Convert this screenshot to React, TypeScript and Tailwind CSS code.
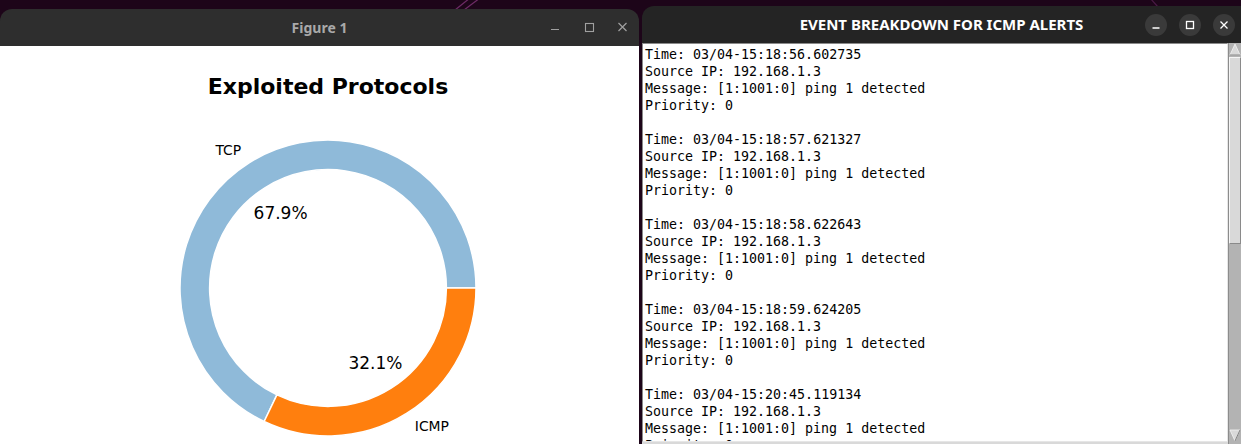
import React from 'react';

const events = [
  '03/04-15:18:56.602735',
  '03/04-15:18:57.621327',
  '03/04-15:18:58.622643',
  '03/04-15:18:59.624205',
  '03/04-15:20:45.119134',
];

function DonutChart() {
  return (
    <svg width="340" height="344" viewBox="0 0 340 344" className="block">
      <path
        d="M 318 188 A 148 148 0 1 0 106.15 321.53 L 118.92 294.82 A 118.4 118.4 0 1 1 288.4 188 Z"
        fill="#8fbad9"
        stroke="#ffffff"
        strokeWidth="1.5"
      />
      <path
        d="M 106.15 321.53 A 148 148 0 0 0 318 188 L 288.4 188 A 118.4 118.4 0 0 1 118.92 294.82 Z"
        fill="#ff7f0e"
        stroke="#ffffff"
        strokeWidth="1.5"
      />
      <g style={{ fontFamily: '"DejaVu Sans", sans-serif' }} fill="#000000">
        <text x="83.2" y="50.3" fontSize="13.9" textAnchor="end" dominantBaseline="central">TCP</text>
        <text x="122.6" y="112.9" fontSize="17" textAnchor="middle" dominantBaseline="central">67.9%</text>
        <text x="256.8" y="325.7" fontSize="13.9" textAnchor="start" dominantBaseline="central">ICMP</text>
        <text x="217.4" y="263.1" fontSize="17" textAnchor="middle" dominantBaseline="central">32.1%</text>
      </g>
    </svg>
  );
}

function Scrollbar() {
  return (
    <div className="w-[13px] h-full flex flex-col bg-[#b3b3b3] border-l border-[#8c8c8c]">
      <svg width="12" height="13" viewBox="0 0 12 13" className="block shrink-0">
        <rect x="0" y="0" width="12" height="13" fill="#b3b3b3" />
        <polygon points="6,1 11,12 1,12" fill="#d9d9d9" stroke="#f4f4f4" strokeWidth="0.8" />
        <line x1="11" y1="12" x2="1" y2="12" stroke="#808080" strokeWidth="1" />
      </svg>
      <div className="mt-[1px] h-[187px] shrink-0 bg-[#d9d9d9] border-t border-l border-[#f5f5f5] border-r-[#8a8a8a] border-b-[#8a8a8a] border-r border-b" />
      <div className="flex-1" />
      <svg width="12" height="13" viewBox="0 0 12 13" className="block shrink-0 mb-[2px]">
        <polygon points="1,1 11,1 6,12" fill="#d9d9d9" stroke="#f4f4f4" strokeWidth="0.8" />
        <line x1="6" y1="12" x2="11" y2="1" stroke="#808080" strokeWidth="1" />
      </svg>
    </div>
  );
}

export default function App() {
  return (
    <div className="relative w-[1241px] h-[444px] overflow-hidden bg-[#1d0519]">
      {/* wallpaper streaks */}
      <svg className="absolute inset-0" width="1241" height="444">
        <line x1="455" y1="10" x2="470" y2="-2" stroke="#6e2c66" strokeWidth="1.2" />
        <line x1="464" y1="10" x2="480" y2="-2" stroke="#6e2c66" strokeWidth="1.2" />
        <line x1="1150" y1="-2" x2="1158" y2="7" stroke="#4a1a45" strokeWidth="1.2" />
      </svg>

      <div className="relative flex items-start gap-[3px]">
        {/* Figure 1 */}
        <div className="w-[639px] mt-[9px] flex flex-col rounded-t-[12px] overflow-hidden">
          <div className="h-[37px] bg-[#2e2e2e] flex items-center relative" style={{ fontFamily: '"Noto Sans", sans-serif' }}>
            <div className="flex-1 text-center text-[14px] font-bold text-[#a9a9a9]">Figure 1</div>
            <div className="absolute right-0 top-0 h-full flex items-center">
              <svg width="34" height="37" viewBox="0 0 34 37">
                <line x1="14" y1="20.5" x2="22" y2="20.5" stroke="#a0a0a0" strokeWidth="1.2" />
              </svg>
              <svg width="34" height="37" viewBox="0 0 34 37">
                <rect x="14.5" y="14.5" width="8" height="8" fill="none" stroke="#a0a0a0" strokeWidth="1.1" />
              </svg>
              <svg width="34" height="37" viewBox="0 0 34 37">
                <path d="M13.5 14 L21.5 22 M21.5 14 L13.5 22" stroke="#a0a0a0" strokeWidth="1.2" />
              </svg>
            </div>
          </div>
          <div className="h-[400px] bg-white flex flex-col pl-[17px]">
            <div
              className="pt-[28px] text-center text-[22px] leading-[26px] font-bold text-black"
              style={{ fontFamily: '"DejaVu Sans", sans-serif' }}
            >
              Exploited Protocols
            </div>
            <div className="flex justify-center">
              <DonutChart />
            </div>
          </div>
        </div>

        {/* Event breakdown window */}
        <div className="w-[599px] mt-[6px] flex flex-col rounded-tl-[12px] overflow-hidden">
          <div className="h-[37px] bg-[#242424] flex items-center relative" style={{ fontFamily: '"Noto Sans", sans-serif' }}>
            <div className="flex-1 text-center text-[15px] font-bold text-white">EVENT BREAKDOWN FOR ICMP ALERTS</div>
            <div className="absolute right-[6px] top-0 h-full flex items-center gap-[12px]">
              <div className="w-[22px] h-[22px] rounded-full bg-[#3a3a3a] flex items-center justify-center">
                <svg width="22" height="22" viewBox="0 0 22 22">
                  <line x1="7.5" y1="14" x2="14.5" y2="14" stroke="#ffffff" strokeWidth="1.4" />
                </svg>
              </div>
              <div className="w-[22px] h-[22px] rounded-full bg-[#3a3a3a] flex items-center justify-center">
                <svg width="22" height="22" viewBox="0 0 22 22">
                  <rect x="7.5" y="7.5" width="7" height="7" fill="none" stroke="#ffffff" strokeWidth="1.3" />
                </svg>
              </div>
              <div className="w-[22px] h-[22px] rounded-full bg-[#3a3a3a] flex items-center justify-center">
                <svg width="22" height="22" viewBox="0 0 22 22">
                  <path d="M7.5 7.5 L14.5 14.5 M14.5 7.5 L7.5 14.5" stroke="#ffffff" strokeWidth="1.3" />
                </svg>
              </div>
            </div>
          </div>
          <div className="h-[401px] bg-[#d9d9d9] flex">
            <div className="flex-1 h-[399px] bg-white border-t border-l border-[#8a8a8a] border-r-[#e6e6e6] border-b-[#e6e6e6] border-r border-b overflow-hidden pt-[2px] pl-[2px]">
              <div
                className="text-[13.3px] leading-[17px] text-black whitespace-pre"
                style={{ fontFamily: '"DejaVu Sans Mono", monospace' }}
              >
                {events.map((t) => (
                  <div key={t}>
                    <div>Time: {t}</div>
                    <div>Source IP: 192.168.1.3</div>
                    <div>Message: [1:1001:0] ping 1 detected</div>
                    <div>Priority: 0</div>
                    <div>&nbsp;</div>
                  </div>
                ))}
              </div>
            </div>
            <Scrollbar />
          </div>
        </div>
      </div>
    </div>
  );
}
